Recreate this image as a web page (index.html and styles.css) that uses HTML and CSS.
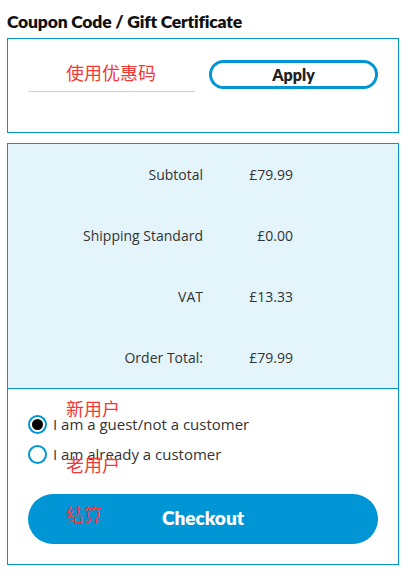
FILE: index.html
```html
<!DOCTYPE html>
<html>
<head>
<meta charset="utf-8">
<link rel="stylesheet" href="styles.css">
</head>
<body>
<div class="page">
  <h2 class="title">Coupon Code / Gift Certificate</h2>
  <div class="coupon-box">
    <div class="coupon-input">
      <span class="note note-input">使用优惠码</span>
    </div>
    <button class="apply-btn">Apply</button>
  </div>
  <div class="summary">
    <div class="row"><span class="label">Subtotal</span><span class="value">£79.99</span></div>
    <div class="row"><span class="label">Shipping Standard</span><span class="value">£0.00</span></div>
    <div class="row"><span class="label">VAT</span><span class="value">£13.33</span></div>
    <div class="row"><span class="label">Order Total:</span><span class="value">£79.99</span></div>
  </div>
  <div class="customer">
    <div class="radio-row">
      <span class="radio checked"></span>
      <span class="radio-label">I am a guest/not a customer</span>
      <span class="note note-new">新用户</span>
    </div>
    <div class="radio-row">
      <span class="radio"></span>
      <span class="radio-label">I am already a customer</span>
      <span class="note note-old">老用户</span>
    </div>
    <button class="checkout-btn">Checkout<span class="note note-pay">结算</span></button>
  </div>
</div>
</body>
</html>
```
FILE: styles.css
```css
* { box-sizing: border-box; }
body {
  margin: 0;
  background: #fff;
  font-family: "Open Sans", "Noto Sans CJK SC", sans-serif;
}
.page {
  width: 399px;
  padding-left: 7px;
  position: relative;
}
.title {
  margin: 0;
  padding-top: 12px;
  height: 38px;
  font-family: "Lato", "Noto Sans", sans-serif;
  font-weight: 800;
  font-size: 17.5px;
  line-height: 20px;
  color: #111;
  letter-spacing: -0.2px;
}
.coupon-box {
  height: 95px;
  border: 1px solid #0096d6;
  display: flex;
  align-items: flex-start;
  padding: 21px 0 0 20px;
  gap: 14px;
}
.coupon-input {
  width: 167px;
  height: 32px;
  border-bottom: 1px solid #d0d0d0;
  position: relative;
}
.apply-btn {
  width: 169px;
  height: 29px;
  border: 3px solid #0096d6;
  border-radius: 15px;
  background: #fff;
  font-family: "Lato", "Noto Sans", sans-serif;
  font-weight: 800;
  font-size: 16px;
  color: #222;
  padding: 0 0 1px 0;
  margin-top: 0;
  text-align: center;
}
.summary {
  margin-top: 10px;
  border: 1px solid #0096d6;
  border-bottom: none;
  background: #e3f4fb;
}
.row {
  height: 61px;
  display: grid;
  grid-template-columns: 195px 90px;
  align-items: center;
  font-size: 14px;
  color: #333;
}
.label, .value { text-align: right; }
.customer {
  border: 1px solid #0096d6;
  height: 177px;
  padding: 20px 20px 0 20px;
}
.radio-row {
  height: 30px;
  display: flex;
  align-items: center;
  gap: 6px;
  position: relative;
}
.radio {
  width: 19px;
  height: 19px;
  border: 2px solid #0096d6;
  border-radius: 50%;
  display: flex;
  align-items: center;
  justify-content: center;
  background: #fff;
}
.radio.checked::after {
  content: "";
  width: 11px;
  height: 11px;
  border-radius: 50%;
  background: #000;
}
.radio-label {
  font-size: 15px;
  color: #333;
}
.checkout-btn {
  margin-top: 25px;
  width: 350px;
  height: 50px;
  border: none;
  border-radius: 25px;
  background: #0096d6;
  color: #fff;
  font-family: "Lato", "Noto Sans", sans-serif;
  font-weight: 800;
  font-size: 19px;
  padding: 0 0 3px 0;
  position: relative;
}
.note {
  position: absolute;
  font-family: "Noto Sans CJK SC", sans-serif;
  font-weight: 400;
  font-size: 18px;
  line-height: 20px;
  color: #f03a3a;
  white-space: nowrap;
}
.note-input { left: 38px; top: 2px; }
.note-new { left: 38px; top: -11px; }
.note-old { left: 38px; top: 15px; }
.note-pay { left: 38px; top: 10px; }
```
